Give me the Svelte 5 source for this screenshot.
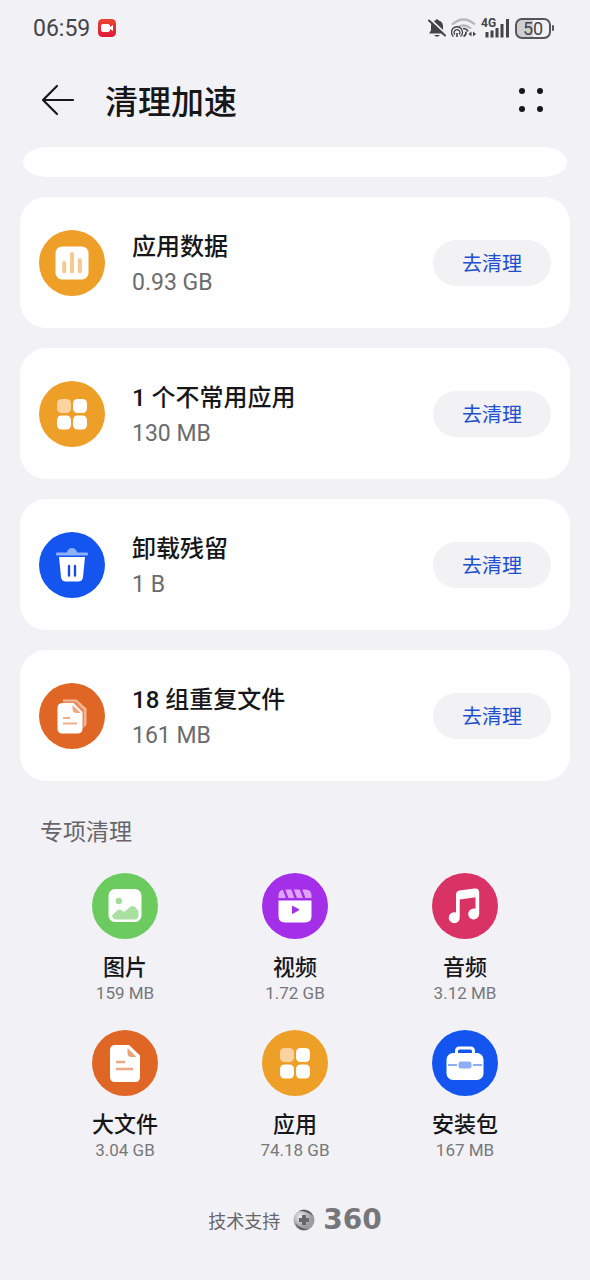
<script lang="ts">
	type Task = { icon: string; color: string; name: string; size: string };

	const tasks: Task[] = [
		{ icon: 'chart', color: '#ee9f27', name: '应用数据', size: '0.93 GB' },
		{ icon: 'apps', color: '#ee9f27', name: '1 个不常用应用', size: '130 MB' },
		{ icon: 'trash', color: '#1355ee', name: '卸载残留', size: '1 B' },
		{ icon: 'copies', color: '#e06626', name: '18 组重复文件', size: '161 MB' }
	];

	const categories: Task[] = [
		{ icon: 'image', color: '#6bcb5f', name: '图片', size: '159 MB' },
		{ icon: 'video', color: '#a42fe9', name: '视频', size: '1.72 GB' },
		{ icon: 'music', color: '#d93265', name: '音频', size: '3.12 MB' },
		{ icon: 'file', color: '#e06626', name: '大文件', size: '3.04 GB' },
		{ icon: 'apps', color: '#ee9f27', name: '应用', size: '74.18 GB' },
		{ icon: 'package', color: '#1355ee', name: '安装包', size: '167 MB' }
	];
</script>

{#snippet badge(icon: string, color: string)}
	<svg class="badge" viewBox="0 0 66 66" aria-hidden="true">
		<circle cx="33" cy="33" r="33" fill={color} />
		{#if icon === 'chart'}
			<rect x="16.5" y="16.5" width="33" height="33" rx="6.5" fill="#fff" />
			<path d="M25.2 33v8.5M33 24v17.5M40.8 30v11.5" stroke="#f6c98e" stroke-width="4" stroke-linecap="round" />
		{:else if icon === 'apps'}
			<rect x="18" y="18" width="14" height="14" rx="4.5" fill="#fad3a0" />
			<rect x="34" y="18" width="14" height="14" rx="4.5" fill="#fff" />
			<rect x="18" y="34.5" width="14" height="14" rx="4.5" fill="#fff" />
			<rect x="34" y="34.5" width="14" height="14" rx="4.5" fill="#fff" />
		{:else if icon === 'trash'}
			<path d="M28 21a5 5 0 0 1 10 0z" fill="#8fb0fa" />
			<rect x="17" y="20.5" width="32" height="3" rx="1" fill="#8fb0fa" />
			<path d="M20 25h26l-2 20q-.5 4.5-5 4.5H27q-4.5 0-5-4.5z" fill="#fff" />
			<path d="M30 34v9.5M36 34v9.5" stroke="#1d4fd0" stroke-width="2.4" stroke-linecap="round" />
		{:else if icon === 'copies'}
			<path d="M24 16.500h13.500l10 9V40q0 4-4 4H28q-4 0-4-4z" fill="#f5b694" />
			<path d="M24 18.500h12.500l8.500 8.500v18H24z" fill="#e8875a" />
			<path d="M24 20h10.500l9 9v16.500q0 5-5 5h-15q-5 0-5-5V25q0-5 5.500-5z" fill="#fff" />
			<path d="M33.500 22v4q0 4 4 4H42z" fill="#ecaa87" />
			<path d="M24 35h7M24 40.500h14" stroke="#f0ae8c" stroke-width="2.2" />
		{:else if icon === 'image'}
			<rect x="16.5" y="16" width="33" height="33" rx="6.5" fill="#fff" />
			<circle cx="26.8" cy="28" r="3.2" fill="#a3dc9a" />
			<path d="M20 42.5l5.500-5.200q2-1.500 4 0l1.500 1.200q1 .6 2-.4l5.500-4.300q2.500-2 4.800.5l3.200 3.400v4.300q0 4.500-4.500 4.500H24q-3.500 0-4-4z" fill="#a9dfa1" />
		{:else if icon === 'video'}
			<path d="M16.5 25v-2.500q0-6 6-6h21q6 0 6 6V25z" fill="#dfa3fb" />
			<path d="M21.5 15l4 11M30 15l4 11M38.500 15l4 11" stroke="#a42fe9" stroke-width="2.4" />
			<path d="M16.5 27.500h33V43q0 6.500-6.500 6.500H23q-6.500 0-6.500-6.500z" fill="#fff" />
			<path d="M30.5 33.200l6.500 3.500-6.500 3.800z" fill="#a42fe9" stroke="#a42fe9" stroke-linejoin="round" />
		{:else if icon === 'music'}
			<path
				d="M24 21.5q.2-3.300 3.500-3.900l15-2q4.700-.5 4.700 4V41a5.500 5.500 0 1 1-3.700-5.200V24.200l-15.800 2.300v17.700a5.500 5.500 0 1 1-3.700-4.700z"
				fill="#fff"
			/>
		{:else if icon === 'file'}
			<path d="M23.5 15H37l11 10.500V47q0 5-5 5H23q-5 0-5-5V20q0-5 5.500-5z" fill="#fff" />
			<path d="M35.5 18v5q0 4 4 4h5z" fill="#eaa37d" />
			<path d="M24 32h9M24 39h17" stroke="#eda985" stroke-width="2.3" />
		{:else if icon === 'package'}
			<path d="M24.5 25v-4q0-3 3-3h11q3 0 3 3v4" fill="none" stroke="#fff" stroke-width="3" />
			<rect x="14.5" y="23" width="37" height="27" rx="6.5" fill="#fff" />
			<path d="M16 35h9M41 35h9" stroke="#8dadf5" stroke-width="2.2" />
			<rect x="26.5" y="31.5" width="13" height="7" rx="2.5" fill="#8dadf5" />
		{/if}
	</svg>
{/snippet}

<div class="screen">
	<div class="status">
		<span class="time">06:59</span>
		<svg class="recorder" viewBox="0 0 18 18" aria-hidden="true">
			<defs>
				<linearGradient id="rec" x2="0" y2="1">
					<stop stop-color="#e8452f" />
					<stop offset="1" stop-color="#df1836" />
				</linearGradient>
			</defs>
			<rect width="18" height="18" rx="4.5" fill="url(#rec)" />
			<rect x="3" y="5" width="9" height="8" rx="2" fill="#fff" />
			<path d="M12 8l3-2v6l-3-2z" fill="#fff" />
		</svg>
		<div class="indicators">
			<svg width="18" height="20" viewBox="0 0 18 20" aria-hidden="true">
				<path d="M1 15.500l2-3V8a6 6 0 0 1 4.300-5.500q1.700-2.500 3.400 0A6 6 0 0 1 15 8v4.500l2 3z" fill="#444448" />
				<path d="M6 17h6q-3 3.500-6 0z" fill="#444448" />
				<path d="M2 1l16 15" stroke="#f1f1f6" stroke-width="2" />
				<path d="M1 2.500l16 15" stroke="#444448" stroke-width="2" stroke-linecap="round" />
			</svg>
			<svg width="26" height="20" viewBox="0 0 26 20" fill="none" aria-hidden="true">
				<path d="M1 6.500q11.500-10 23 0M5 10.500q7.500-6 15 0" stroke="#b9b9bd" stroke-width="2.2" />
				<circle cx="6" cy="15" r="6.5" fill="#f1f1f6" />
				<path d="M2.5 18.500a5.500 5.500 0 1 1 7 0M4 16.500a2.800 2.800 0 1 1 4 0" stroke="#444448" stroke-width="1.3" />
				<path d="M6 15v4M12 10.500q4 0 5 3M12.500 18.500q3-1.500 2.500-5" stroke="#444448" stroke-width="1.6" />
				<path d="M20.5 13.500v5l-3-2.500zM22 13.500v5l3-2.500z" fill="#444448" />
			</svg>
			<div class="signal">
				<span class="network">4G</span>
				<svg width="28" height="20" viewBox="0 0 28 20" aria-hidden="true">
					<path d="M5 14v5.500M10 12.500v7M15 10v9.500M20 6v13.500M25.500 1v18.500" stroke="#444448" stroke-width="3" />
				</svg>
			</div>
			<div class="battery"><span class="level">50</span></div>
		</div>
	</div>

	<header>
		<button class="back" aria-label="返回">
			<svg width="34" height="32" viewBox="0 0 34 32" fill="none" stroke="#17171a" stroke-width="2.2" stroke-linecap="round" stroke-linejoin="round">
				<path d="M16 2L2 16l14 14M2 16h30" />
			</svg>
		</button>
		<h1>清理加速</h1>
		<button class="more" aria-label="更多">
			<svg width="28" height="28" viewBox="0 0 28 28" fill="#17171a">
				<circle cx="5" cy="5" r="3" />
				<circle cx="23" cy="5" r="3" />
				<circle cx="5" cy="23" r="3" />
				<circle cx="23" cy="23" r="3" />
			</svg>
		</button>
	</header>

	<main>
		<div class="clipped"></div>

		{#each tasks as task}
			<section class="card">
				{@render badge(task.icon, task.color)}
				<div class="info">
					<h2>{task.name}</h2>
					<p>{task.size}</p>
				</div>
				<button class="clean">去清理</button>
			</section>
		{/each}

		<h3>专项清理</h3>
		<div class="grid">
			{#each categories as item}
				<button class="category">
					{@render badge(item.icon, item.color)}
					<span class="name">{item.name}</span>
					<span class="size">{item.size}</span>
				</button>
			{/each}
		</div>
	</main>

	<footer>
		<span>技术支持</span>
		<svg width="22" height="22" viewBox="0 0 22 22" aria-hidden="true">
			<defs>
				<radialGradient id="ball" cx=".35" cy=".35">
					<stop stop-color="#efeff1" />
					<stop offset="1" stop-color="#9c9c9f" />
				</radialGradient>
			</defs>
			<circle cx="11" cy="11" r="10.5" fill="url(#ball)" />
			<path d="M6 2q9-4 14 5-6-5-14-5zM2 14q5 6 14 6Q6 24 2 14z" fill="#5d5d60" />
			<path d="M9 6h4v3h3v4h-3v3H9v-3H6V9h3z" fill="#67676a" />
		</svg>
		<span class="brand">360</span>
	</footer>
</div>

<style>
	:global(body) {
		margin: 0;
		background: #f1f1f6;
	}
	.screen {
		font-family: Roboto, 'Noto Sans CJK SC', sans-serif;
		color: #17171a;
	}
	button {
		padding: 0;
		border: 0;
		background: none;
		color: inherit;
		font-family: inherit;
		cursor: pointer;
	}
	h1,
	h2,
	h3,
	p {
		margin: 0;
	}
	svg {
		display: block;
		flex: none;
	}

	.status {
		display: flex;
		align-items: center;
		height: 56px;
		padding: 0 36px 0 33px;
		color: #444448;
	}
	.time {
		font-size: 23px;
	}
	.recorder {
		width: 18px;
		height: 18px;
		margin-left: 8px;
	}
	.indicators {
		display: flex;
		align-items: center;
		gap: 5px;
		margin-left: auto;
	}
	.signal {
		position: relative;
	}
	.network {
		position: absolute;
		top: -1px;
		left: -1px;
		font-size: 12px;
		line-height: 12px;
		font-weight: 700;
	}
	.battery {
		display: flex;
		align-items: center;
	}
	.level {
		width: 32px;
		border: 2px solid #55555a;
		border-radius: 7px;
		background: linear-gradient(90deg, #cfcfd2 50%, transparent 50%);
		font-size: 18px;
		line-height: 17px;
		text-align: center;
	}
	.battery::after {
		content: '';
		width: 2px;
		height: 6px;
		margin-left: 1px;
		border-radius: 1px;
		background: #55555a;
	}

	header {
		display: flex;
		align-items: center;
		height: 88px;
		padding: 0 45px 3px 41px;
	}
	h1 {
		margin-left: 30px;
		font-size: 33px;
		font-weight: 500;
	}
	.more {
		margin-left: auto;
	}

	main {
		padding: 0 20px;
	}
	.clipped {
		height: 30px;
		margin: 0 3px;
		border-radius: 24px / 15px;
		background: #fff;
	}
	.card {
		display: flex;
		align-items: center;
		height: 131px;
		margin-top: 20px;
		padding: 0 19px;
		border-radius: 26px;
		background: #fff;
	}
	.badge {
		width: 66px;
		height: 66px;
	}
	.info {
		flex: 1;
		margin-left: 27px;
		padding-top: 4px;
	}
	h2 {
		font-size: 24px;
		line-height: 36px;
		font-weight: 500;
	}
	.info p {
		font-size: 23px;
		line-height: 36px;
		color: #6b6b6e;
	}
	.clean {
		width: 118px;
		height: 46px;
		border-radius: 23px;
		background: #f2f1f3;
		color: #1e50cf;
		font-size: 20px;
	}

	h3 {
		margin: 36px 20px 0;
		font-size: 23px;
		line-height: 32px;
		font-weight: 400;
		color: #66666a;
	}
	.grid {
		display: grid;
		grid-template-columns: repeat(3, 1fr);
		row-gap: 27px;
		margin: 24px 20px 0;
	}
	.category {
		display: flex;
		flex-direction: column;
		align-items: center;
	}
	.name {
		margin-top: 14px;
		font-size: 22px;
		line-height: 30px;
		font-weight: 500;
	}
	.size {
		font-size: 17px;
		line-height: 20px;
		color: #77777b;
	}

	footer {
		display: flex;
		align-items: center;
		justify-content: center;
		height: 24px;
		margin: 48px 0 46px;
		font-size: 18px;
		color: #66666a;
	}
	footer svg {
		margin: 0 8px 0 13px;
	}
	.brand {
		font-family: 'DejaVu Sans', sans-serif;
		font-size: 28px;
		line-height: 24px;
		font-weight: 700;
		color: #77777b;
	}
</style>
